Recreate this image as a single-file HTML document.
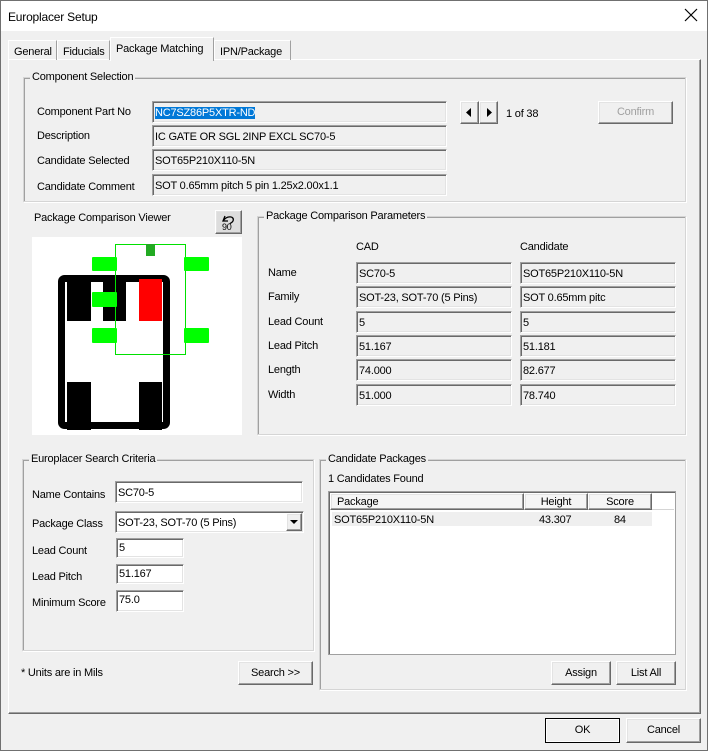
<!DOCTYPE html>
<html><head><style>
*{box-sizing:border-box;margin:0;padding:0}
body{width:708px;height:751px;background:#f0f0f0;font-family:"Liberation Sans",sans-serif;font-size:11px;letter-spacing:-0.2px;color:#000;position:relative;overflow:hidden}
.a{position:absolute;white-space:nowrap}
.t{position:absolute;white-space:nowrap;line-height:14px;margin-top:1px}
.g{position:absolute;border:1px solid #d5d5d5;box-shadow:inset 1px 1px 0 #a0a0a0, 1px 1px 0 #fff}
.gl{position:absolute;top:-8px;left:6px;background:#f0f0f0;padding:0 2px;line-height:14px}
.f{position:absolute;height:22px;white-space:nowrap;overflow:hidden;border-top:1px solid #a0a0a0;border-left:1px solid #a0a0a0;border-right:1px solid #fff;border-bottom:1px solid #fff;box-shadow:inset 1px 1px 0 #696969,inset -1px -1px 0 #e3e3e3;padding:4px 0 0 2px;line-height:14px;background:#f0f0f0}
.w{background:#fff}
.b{position:absolute;white-space:nowrap;border:1px solid #fff;border-right-color:#696969;border-bottom-color:#696969;box-shadow:inset -1px -1px 0 #a0a0a0,inset 1px 1px 0 #e3e3e3;text-align:center;background:#f0f0f0}
.tab{position:absolute;top:40px;height:20px;white-space:nowrap;border:1px solid #fff;border-right-color:#a0a0a0;border-bottom:none;padding:4px 5px 0;line-height:14px}
</style></head><body>
<div class="a" style="left:0;top:0;width:708px;height:751px;border:1px solid #707070"></div>
<div class="a" style="left:1px;top:1px;width:706px;height:30px;background:#fff"></div>
<div class="t" style="left:8px;top:9px;font-size:12px">Europlacer Setup</div>
<svg class="a" style="left:684px;top:8px" width="14" height="14"><path d="M1 1L13 13M13 1L1 13" stroke="#000" stroke-width="1.2"/></svg>

<div class="a" style="left:8px;top:59px;width:693px;height:655px;border:1px solid #fff;border-right-color:#696969;border-bottom-color:#696969;box-shadow:inset -1px -1px 0 #a0a0a0"></div>
<div class="tab" style="left:8px;width:49px">General</div>
<div class="tab" style="left:57px;width:53px">Fiducials</div>
<div class="tab" style="left:110px;top:37px;height:24px;width:104px;background:#f0f0f0;padding-top:4px">Package Matching</div>
<div class="tab" style="left:214px;width:77px">IPN/Package</div>

<div class="g" style="left:23px;top:77px;width:663px;height:125px"><span class="gl">Component Selection</span></div>
<div class="t" style="left:37px;top:104px">Component Part No</div>
<div class="t" style="left:37px;top:128px">Description</div>
<div class="t" style="left:37px;top:153px">Candidate Selected</div>
<div class="t" style="left:37px;top:179px">Candidate Comment</div>
<div class="f" style="left:152px;top:101px;width:295px"><span style="background:#0078d7;color:#fff">NC7SZ86P5XTR-ND</span></div>
<div class="f" style="left:152px;top:125px;width:295px">IC GATE OR SGL 2INP EXCL SC70-5</div>
<div class="f" style="left:152px;top:149px;width:295px">SOT65P210X110-5N</div>
<div class="f" style="left:152px;top:174px;width:295px">SOT 0.65mm pitch 5 pin 1.25x2.00x1.1</div>
<div class="b" style="left:460px;top:101px;width:19px;height:23px"><svg width="17" height="21"><path d="M10 6L5 10.5L10 15Z"/></svg></div>
<div class="b" style="left:479px;top:101px;width:19px;height:23px"><svg width="17" height="21"><path d="M7 6L12 10.5L7 15Z"/></svg></div>
<div class="t" style="left:506px;top:106px">1 of 38</div>
<div class="b" style="left:598px;top:101px;width:75px;height:23px;color:#a0a0a0;line-height:21px">Confirm</div>

<div class="t" style="left:34px;top:210px">Package Comparison Viewer</div>
<div class="b" style="left:215px;top:210px;width:27px;height:24px;background:#ddd;font-size:9px;line-height:9px;padding-top:2px"><svg width="22" height="18"><path d="M7 3L5 8L10 8M5 8C9 2 17 3 15 8C14 10 12 10 12 11" fill="none" stroke="#000" stroke-width="1.3"/><text x="4" y="17" font-size="9" font-family="Liberation Sans">90</text></svg></div>
<svg class="a" style="left:32px;top:237px" width="210" height="198">
<rect x="0" y="0" width="210" height="198" fill="#fff"/>
<rect x="29.5" y="41.5" width="105" height="147" rx="3" fill="none" stroke="#000" stroke-width="7"/>
<rect x="35" y="42" width="24" height="42"/>
<rect x="71" y="42" width="23" height="42"/>
<rect x="107" y="42" width="23" height="42" fill="#f00"/>
<rect x="35" y="145" width="24" height="48"/>
<rect x="107" y="145" width="23" height="48"/>
<rect x="83.5" y="7.5" width="70" height="110" fill="none" stroke="#00e000"/>
<rect x="114" y="7" width="9" height="12" fill="#22aa22"/>
<rect x="60" y="20" width="25" height="14" rx="1" fill="#00ff00"/>
<rect x="152" y="20" width="25" height="14" rx="1" fill="#00ff00"/>
<rect x="60" y="55" width="25" height="15" rx="1" fill="#00ff00"/>
<rect x="60" y="91" width="25" height="15" rx="1" fill="#00ff00"/>
<rect x="152" y="91" width="25" height="15" rx="1" fill="#00ff00"/>
</svg>

<div class="g" style="left:257px;top:216px;width:429px;height:219px"><span class="gl">Package Comparison Parameters</span></div>
<div class="t" style="left:356px;top:239px">CAD</div>
<div class="t" style="left:520px;top:239px">Candidate</div>
<div class="t" style="left:268px;top:265px">Name</div>
<div class="t" style="left:268px;top:289px">Family</div>
<div class="t" style="left:268px;top:314px">Lead Count</div>
<div class="t" style="left:268px;top:338px">Lead Pitch</div>
<div class="t" style="left:268px;top:362px">Length</div>
<div class="t" style="left:268px;top:387px">Width</div>
<div class="f" style="left:356px;top:262px;width:156px">SC70-5</div>
<div class="f" style="left:356px;top:286px;width:156px">SOT-23, SOT-70 (5 Pins)</div>
<div class="f" style="left:356px;top:311px;width:156px">5</div>
<div class="f" style="left:356px;top:335px;width:156px">51.167</div>
<div class="f" style="left:356px;top:359px;width:156px">74.000</div>
<div class="f" style="left:356px;top:384px;width:156px">51.000</div>
<div class="f" style="left:520px;top:262px;width:156px">SOT65P210X110-5N</div>
<div class="f" style="left:520px;top:286px;width:156px">SOT 0.65mm pitc</div>
<div class="f" style="left:520px;top:311px;width:156px">5</div>
<div class="f" style="left:520px;top:335px;width:156px">51.181</div>
<div class="f" style="left:520px;top:359px;width:156px">82.677</div>
<div class="f" style="left:520px;top:384px;width:156px">78.740</div>

<div class="g" style="left:22px;top:459px;width:292px;height:192px"><span class="gl">Europlacer Search Criteria</span></div>
<div class="t" style="left:32px;top:487px">Name Contains</div>
<div class="t" style="left:32px;top:516px">Package Class</div>
<div class="t" style="left:32px;top:543px">Lead Count</div>
<div class="t" style="left:32px;top:569px">Lead Pitch</div>
<div class="t" style="left:32px;top:595px">Minimum Score</div>
<div class="f w" style="left:115px;top:481px;width:188px">SC70-5</div>
<div class="f w" style="left:115px;top:511px;width:189px">SOT-23, SOT-70 (5 Pins)</div>
<div class="b" style="left:286px;top:513px;width:16px;height:18px"><svg width="14" height="16"><path d="M3 6L11 6L7 10Z"/></svg></div>
<div class="f w" style="left:116px;top:538px;width:68px;height:20px;padding-top:2px">5</div>
<div class="f w" style="left:116px;top:564px;width:68px;height:20px;padding-top:2px">51.167</div>
<div class="f w" style="left:116px;top:590px;width:68px;height:22px;padding-top:2px">75.0</div>
<div class="t" style="left:21px;top:665px">* Units are in Mils</div>
<div class="b" style="left:238px;top:661px;width:75px;height:24px;line-height:22px">Search &gt;&gt;</div>

<div class="g" style="left:319px;top:459px;width:367px;height:231px"><span class="gl">Candidate Packages</span></div>
<div class="t" style="left:328px;top:471px">1 Candidates Found</div>
<div class="a" style="left:328px;top:491px;width:348px;height:164px;background:#fff;border:1px solid #a0a0a0;box-shadow:inset 1px 1px 0 #696969"></div>
<div class="a" style="left:330px;top:493px;width:344px;height:17px;border-bottom:1px solid #d5d5d5"></div>
<div class="b" style="left:330px;top:493px;width:194px;height:17px;text-align:left;padding-left:6px;line-height:16px;background:#f5f5f5">Package</div>
<div class="b" style="left:524px;top:493px;width:64px;height:17px;line-height:16px;background:#f5f5f5">Height</div>
<div class="b" style="left:588px;top:493px;width:64px;height:17px;line-height:16px;background:#f5f5f5">Score</div>
<div class="a" style="left:332px;top:512px;width:320px;height:14px;background:#efefef"></div>
<div class="t" style="left:334px;top:512px">SOT65P210X110-5N</div>
<div class="t" style="left:539px;top:512px">43.307</div>
<div class="t" style="left:614px;top:512px">84</div>
<div class="b" style="left:551px;top:661px;width:60px;height:24px;line-height:22px">Assign</div>
<div class="b" style="left:616px;top:661px;width:60px;height:24px;line-height:22px">List All</div>

<div class="b" style="left:545px;top:718px;width:75px;height:25px;line-height:23px;border-color:#000;box-shadow:inset 0 0 0 1px #fff">OK</div>
<div class="b" style="left:626px;top:718px;width:75px;height:25px;line-height:23px">Cancel</div>
</body></html>
